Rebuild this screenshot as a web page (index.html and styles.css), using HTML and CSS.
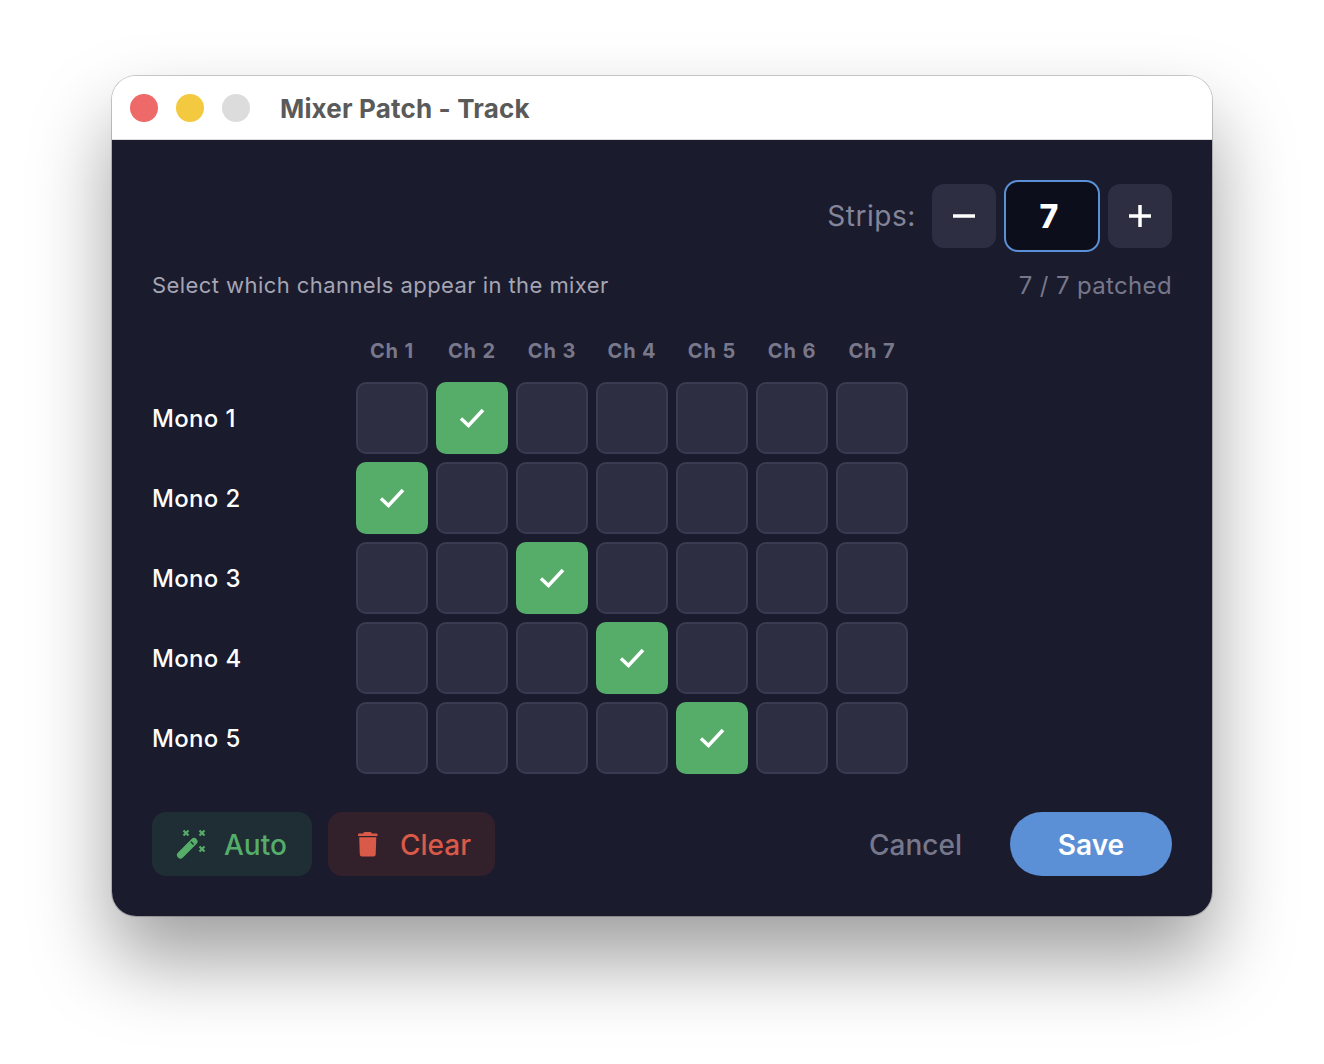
FILE: index.html
```html
<!DOCTYPE html>
<html lang="en">
	<head>
		<meta charset="UTF-8" />
		<title>Mixer Patch - Track</title>
		<link rel="stylesheet" href="styles.css">
	</head>
	<body>
		<div class="window">
			<div class="titlebar">
				<span class="light red"></span>
				<span class="light yellow"></span>
				<span class="light gray"></span>
				<span class="title">Mixer Patch - Track</span>
			</div>
			<div class="content">
				<div class="strips">
					<span class="strips-label">Strips:</span>
					<button class="step">
						<svg width="24" height="24" viewBox="0 0 24 24"><path d="M1 12H23" /></svg>
					</button>
					<div class="count">7</div>
					<button class="step">
						<svg width="24" height="24" viewBox="0 0 24 24"><path d="M1 12H23M12 1V23" /></svg>
					</button>
				</div>
				<div class="info">
					<span class="hint">Select which channels appear in the mixer</span>
					<span class="patched">7 / 7 patched</span>
				</div>
				<div class="matrix">
					<div></div>
					<div class="ch">Ch 1</div>
					<div class="ch">Ch 2</div>
					<div class="ch">Ch 3</div>
					<div class="ch">Ch 4</div>
					<div class="ch">Ch 5</div>
					<div class="ch">Ch 6</div>
					<div class="ch">Ch 7</div>

					<div class="mono">Mono 1</div>
					<div class="cell"></div>
					<div class="cell on"><svg width="28" height="24" viewBox="0 0 28 24"><path d="M3 12.500L10.500 19.500L25 4" /></svg></div>
					<div class="cell"></div>
					<div class="cell"></div>
					<div class="cell"></div>
					<div class="cell"></div>
					<div class="cell"></div>

					<div class="mono">Mono 2</div>
					<div class="cell on"><svg width="28" height="24" viewBox="0 0 28 24"><path d="M3 12.500L10.500 19.500L25 4" /></svg></div>
					<div class="cell"></div>
					<div class="cell"></div>
					<div class="cell"></div>
					<div class="cell"></div>
					<div class="cell"></div>
					<div class="cell"></div>

					<div class="mono">Mono 3</div>
					<div class="cell"></div>
					<div class="cell"></div>
					<div class="cell on"><svg width="28" height="24" viewBox="0 0 28 24"><path d="M3 12.500L10.500 19.500L25 4" /></svg></div>
					<div class="cell"></div>
					<div class="cell"></div>
					<div class="cell"></div>
					<div class="cell"></div>

					<div class="mono">Mono 4</div>
					<div class="cell"></div>
					<div class="cell"></div>
					<div class="cell"></div>
					<div class="cell on"><svg width="28" height="24" viewBox="0 0 28 24"><path d="M3 12.500L10.500 19.500L25 4" /></svg></div>
					<div class="cell"></div>
					<div class="cell"></div>
					<div class="cell"></div>

					<div class="mono">Mono 5</div>
					<div class="cell"></div>
					<div class="cell"></div>
					<div class="cell"></div>
					<div class="cell"></div>
					<div class="cell on"><svg width="28" height="24" viewBox="0 0 28 24"><path d="M3 12.500L10.500 19.500L25 4" /></svg></div>
					<div class="cell"></div>
					<div class="cell"></div>
				</div>
				<div class="footer">
					<button class="action auto">
						<svg width="32" height="32" viewBox="0 0 32 32">
							<path class="wand" d="M4.500 27L18 13.500" />
							<path class="notch" d="M14.800 13.800L17.600 16.600" />
							<path class="sparks" d="M7.500 2.500L12.500 7.500M12.500 2.500L7.500 7.500M23.500 2.500L28.500 7.500M28.500 2.500L23.500 7.500M23.500 18.500L28.500 23.500M28.500 18.500L23.500 23.500" />
						</svg>
						<span>Auto</span>
					</button>
					<button class="action clear">
						<svg width="22" height="26" viewBox="0 0 22 26">
							<path d="M6.500 1.800Q6.800 1 7.800 1H13.200Q14.200 1 14.500 1.800L14.800 2.500H19.500Q20.500 2.500 20.500 3.500V5H1V3.500Q1 2.500 2 2.500H6.200ZM2.200 6.300H19.300L18.700 23.500Q18.600 25.500 16.500 25.500H5Q2.900 25.500 2.800 23.500Z" />
						</svg>
						<span>Clear</span>
					</button>
					<div class="spacer"></div>
					<button class="cancel">Cancel</button>
					<button class="save">Save</button>
				</div>
			</div>
		</div>
	</body>
</html>
```

FILE: styles.css
```css
* {
	box-sizing: border-box;
}

body {
	margin: 0;
	height: 1064px;
	overflow: hidden;
	background-color: #ffffff;
	font-family: Inter, "Liberation Sans", sans-serif;
}

button {
	font-family: inherit;
	border: none;
	padding: 0;
}

.window {
	width: 1100px;
	height: 840px;
	margin: 76px 0 0 112px;
	border-radius: 24px;
	overflow: hidden;
	box-shadow: 0 0 0 1px rgba(0, 0, 0, 0.2), 0 44px 80px rgba(0, 0, 0, 0.38);
	display: flex;
	flex-direction: column;
}

.titlebar {
	height: 64px;
	flex-shrink: 0;
	background-color: #ffffff;
	border-bottom: 1px solid #dcdcdc;
	display: flex;
	align-items: center;
	padding-left: 18px;
	gap: 18px;
}

.light {
	width: 28px;
	height: 28px;
	border-radius: 50%;
}

.red {
	background-color: #ee6a69;
}

.yellow {
	background-color: #f3c93f;
}

.gray {
	background-color: #dcdcdc;
}

.title {
	margin-left: 12px;
	padding-top: 2px;
	font-size: 26px;
	font-weight: 650;
	letter-spacing: 0.17px;
	color: #5a5a5a;
}

.content {
	flex: 1;
	background-color: #1a1b2d;
	padding: 40px;
	display: flex;
	flex-direction: column;
}

.strips {
	display: flex;
	justify-content: flex-end;
	align-items: center;
	gap: 8px;
	height: 72px;
}

.strips-label {
	font-size: 28px;
	letter-spacing: 0.55px;
	color: #85859a;
	margin-right: 8px;
}

.step {
	width: 64px;
	height: 64px;
	border-radius: 12px;
	background-color: #2d2e42;
	display: flex;
	align-items: center;
	justify-content: center;
}

.step path {
	stroke: #ffffff;
	stroke-width: 3.5;
	fill: none;
}

.count {
	width: 96px;
	height: 72px;
	padding-right: 6px;
	border-radius: 14px;
	border: 2px solid #5b8fd6;
	background-color: #0d0e1b;
	color: #ffffff;
	font-size: 32px;
	font-weight: 800;
	display: flex;
	align-items: center;
	justify-content: center;
}

.info {
	display: flex;
	justify-content: space-between;
	align-items: center;
	margin-top: 19px;
	height: 28px;
}

.hint {
	font-size: 22px;
	letter-spacing: 0.43px;
	color: #a5a5b4;
}

.patched {
	font-size: 24px;
	letter-spacing: 0.35px;
	color: #77778c;
}

.matrix {
	display: grid;
	grid-template-columns: 196px repeat(7, 72px);
	grid-template-rows: 48px repeat(5, 72px);
	gap: 8px;
	margin-top: 27px;
}

.ch {
	display: flex;
	align-items: center;
	justify-content: center;
	padding-top: 2px;
	font-size: 20px;
	font-weight: 700;
	letter-spacing: 0.9px;
	color: #78788a;
}

.mono {
	display: flex;
	align-items: center;
	padding-top: 1px;
	font-size: 24px;
	font-weight: 450;
	letter-spacing: 0.33px;
	color: #ffffff;
}

.cell {
	border-radius: 10px;
	border: 2px solid #3a3b52;
	background-color: #2d2e42;
	display: flex;
	align-items: center;
	justify-content: center;
}

.cell.on {
	border-color: #55ad69;
	background-color: #55ad69;
}

.cell path {
	stroke: #ffffff;
	stroke-width: 3.5;
	fill: none;
}

.footer {
	display: flex;
	align-items: center;
	gap: 16px;
	margin-top: 38px;
	height: 64px;
}

.spacer {
	flex: 1;
}

.action {
	height: 64px;
	border-radius: 14px;
	font-size: 28px;
	font-weight: 500;
	display: flex;
	align-items: center;
}

.action span {
	padding-top: 2px;
}

.auto {
	width: 160px;
	padding-left: 24px;
	gap: 16px;
	background-color: #1f2d34;
	color: #55ad69;
}

.auto .wand {
	stroke: #55ad69;
	stroke-width: 7;
	stroke-linecap: round;
	fill: none;
}

.auto .notch {
	stroke: #1f2d34;
	stroke-width: 1.4;
	fill: none;
}

.auto .sparks {
	stroke: #55ad69;
	stroke-width: 2.2;
	fill: none;
}

.clear {
	width: 167px;
	padding-left: 29px;
	gap: 21px;
	background-color: #32212b;
	color: #d95a48;
}

.clear path {
	fill: #d95a48;
}

.cancel {
	width: 125px;
	height: 64px;
	margin-right: 16px;
	padding-top: 2px;
	font-size: 28px;
	font-weight: 500;
	background: none;
	color: #77778c;
}

.save {
	width: 162px;
	height: 64px;
	padding-top: 2px;
	border-radius: 32px;
	background-color: #5b8fd6;
	color: #ffffff;
	font-size: 28px;
	font-weight: 600;
}
```
